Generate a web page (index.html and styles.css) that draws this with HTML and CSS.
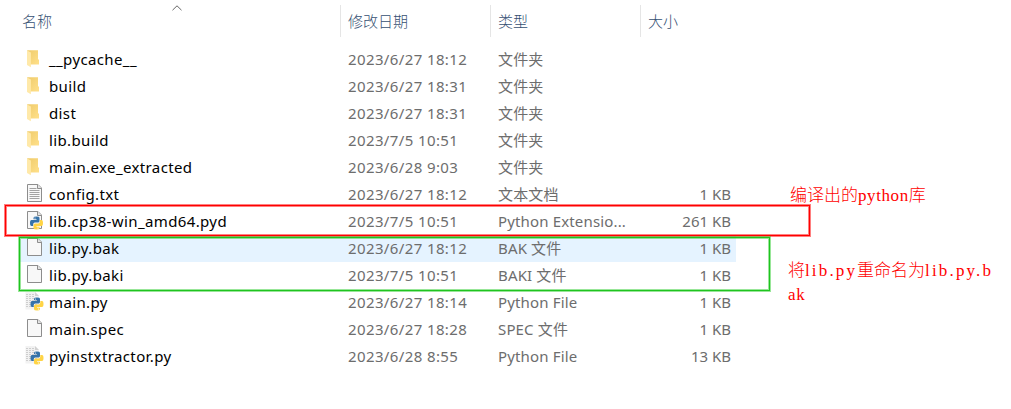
FILE: index.html
```html
<!DOCTYPE html>
<html lang="zh-CN">
<head>
<meta charset="utf-8">
<title>名称</title>
<link rel="stylesheet" href="styles.css">
</head>
<body>
<svg class="defs" width="0" height="0">
  <defs>
    <linearGradient id="fold" x1="0" y1="0" x2="1" y2="1"><stop offset="0" stop-color="#efcb6b"/><stop offset="1" stop-color="#ffe08a"/></linearGradient>
    <symbol id="folder" viewBox="0 0 20 20">
      <path d="M2.2 1.2H13V10.500h1v5H2.2z" fill="url(#fold)"/>
      <path d="M2 1.5L5.900 3.500v14.700L2 16z" fill="#ffe9a9"/>
    </symbol>
    <symbol id="page" viewBox="0 0 20 20">
      <path d="M2.5 .5H13L16.5 4V17.5H2.5z" fill="#f8f8f8" stroke="#8d8d8d"/>
      <path d="M12.5 .5V4.500H16.5" fill="#e4e4e4" stroke="#8d8d8d"/>
    </symbol>
    <symbol id="snakes" viewBox="0 0 14 14">
      <path d="M4 3.3V1.8Q4 .5 7 .5T10 1.8V5Q10 6.6 8.4 6.6H5.3Q3.7 6.6 3.7 8.2V10H2Q.5 10 .5 7T2 4H7V3.3z" fill="#3673a9"/>
      <path d="M10 10.7V12.2Q10 13.5 7 13.5T4 12.2V9Q4 7.4 5.6 7.4H8.7Q10.3 7.4 10.3 5.8V4H12Q13.5 4 13.5 7T12 10H7V10.7z" fill="#ffd445"/>
      <circle cx="5.5" cy="2" r=".6" fill="#fff"/><circle cx="8.5" cy="12" r=".6" fill="#fff"/>
    </symbol>
    <symbol id="text" viewBox="0 0 20 20">
      <use href="#page"/>
      <path d="M4.500 4.500h7M4.500 6.500h10M4.500 8.500h10M4.500 10.500h10M4.500 12.500h10M4.500 14.500h10" stroke="#a2a2a2"/>
    </symbol>
    <symbol id="pyd" viewBox="0 0 20 20">
      <use href="#page"/>
      <use href="#snakes" x="4.500" y="5" width="14" height="14"/>
    </symbol>
    <symbol id="py" viewBox="0 0 20 20">
      <path d="M.5 0H10L14 4V17.500H.5z" fill="#f2f2f2"/>
      <path d="M10 0V4H14z" fill="#d2d2d2"/>
      <path d="M1 2.500h8M1 4.500h9M1 6.500h12M1 8.500h12M1 10.500h12M1 12.500h12M1 14.500h12" stroke="#cecece" stroke-dasharray="2 1"/>
      <use href="#snakes" x="5" y="5" width="14" height="14"/>
    </symbol>
  </defs>
</svg>
<main class="explorer">
  <header class="head">
    <div class="h name-h">名称<svg class="sort" width="10" height="6"><path d="M.5 5.2L5 .8l4.500 4.400" fill="none" stroke="#666"/></svg></div>
    <div class="h">修改日期</div><div class="h">类型</div><div class="h">大小</div>
  </header>
  <section class="list">
    <div class="row"><svg class="icon"><use href="#folder"/></svg><span class="name">__pycache__</span><span class="date">2023/6/27 18:12</span><span class="type">文件夹</span><span class="size"></span></div>
    <div class="row"><svg class="icon"><use href="#folder"/></svg><span class="name">build</span><span class="date">2023/6/27 18:31</span><span class="type">文件夹</span><span class="size"></span></div>
    <div class="row"><svg class="icon"><use href="#folder"/></svg><span class="name">dist</span><span class="date">2023/6/27 18:31</span><span class="type">文件夹</span><span class="size"></span></div>
    <div class="row"><svg class="icon"><use href="#folder"/></svg><span class="name">lib.build</span><span class="date">2023/7/5 10:51</span><span class="type">文件夹</span><span class="size"></span></div>
    <div class="row"><svg class="icon"><use href="#folder"/></svg><span class="name">main.exe_extracted</span><span class="date">2023/6/28 9:03</span><span class="type">文件夹</span><span class="size"></span></div>
    <div class="row"><svg class="icon"><use href="#text"/></svg><span class="name">config.txt</span><span class="date">2023/6/27 18:12</span><span class="type">文本文档</span><span class="size">1 KB</span></div>
    <div class="row"><svg class="icon"><use href="#pyd"/></svg><span class="name">lib.cp38-win_amd64.pyd</span><span class="date">2023/7/5 10:51</span><span class="type">Python Extensio...</span><span class="size">261 KB</span></div>
    <div class="row hover"><svg class="icon"><use href="#page"/></svg><span class="name">lib.py.bak</span><span class="date">2023/6/27 18:12</span><span class="type">BAK 文件</span><span class="size">1 KB</span></div>
    <div class="row"><svg class="icon"><use href="#page"/></svg><span class="name">lib.py.baki</span><span class="date">2023/7/5 10:51</span><span class="type">BAKI 文件</span><span class="size">1 KB</span></div>
    <div class="row"><svg class="icon"><use href="#py"/></svg><span class="name">main.py</span><span class="date">2023/6/27 18:14</span><span class="type">Python File</span><span class="size">1 KB</span></div>
    <div class="row"><svg class="icon"><use href="#page"/></svg><span class="name">main.spec</span><span class="date">2023/6/27 18:28</span><span class="type">SPEC 文件</span><span class="size">1 KB</span></div>
    <div class="row"><svg class="icon"><use href="#py"/></svg><span class="name">pyinstxtractor.py</span><span class="date">2023/6/28 8:55</span><span class="type">Python File</span><span class="size">13 KB</span></div>
  </section>
  <div class="box red"></div>
  <div class="box green"></div>
  <div class="note compiled">编译出的<span class="latin python">python</span>库</div>
  <div class="note renamed">将<span class="latin">lib.py</span>重命名为<span class="latin">lib.py.b</span><br><span class="latin ak">ak</span></div>
</main>
</body>
</html>
```
FILE: styles.css
```css
body { margin: 0; background: #fff; font-family: "Noto Sans", "Noto Sans CJK SC", sans-serif; font-size: 15px; }
.defs { position: absolute; }
.explorer { position: relative; width: 1011px; height: 409px; overflow: hidden; }
.head { display: grid; grid-template-columns: 340px 150px 150px 150px; padding-top: 5px; height: 46px; box-sizing: border-box; }
.h { height: 32px; line-height: 32px; box-sizing: border-box; padding-left: 7px; border-left: 1px solid #e5e5e5; color: #354f72; font-family: "Noto Sans CJK SC", sans-serif; font-weight: 300; }
.name-h { padding-left: 21px; border-color: transparent; }
.sort { position: absolute; left: 172px; top: 5px; }
.list { padding-left: 20px; }
.row { display: grid; grid-template-columns: 24px 299px 150px 233px; align-items: center; grid-auto-flow: column; height: 27px; line-height: 27px; padding-left: 5px; width: 711px; color: #6d6d6d; white-space: nowrap; }
.row { grid-template-columns: 24px 299px 150px 133px 100px; }
.hover { background: #e5f3ff; }
.icon { width: 20px; height: 20px; margin-top: -1px; }
.name { color: #000; letter-spacing: .38px; }
.date { letter-spacing: .38px; }
.type { letter-spacing: .15px; }
.size { text-align: right; }
.box { position: absolute; box-sizing: border-box; border: 1px solid; }
.red { left: 5px; top: 205px; width: 805px; height: 31px; border-color: #f00; box-shadow: 0 0 0 1px #ff000080, inset 0 0 0 1px #ff000080; }
.green { left: 19px; top: 237px; width: 751px; height: 54px; border-color: #1fc41f; box-shadow: 0 0 0 1px #32cd3280, inset 0 0 0 1px #32cd3280; }
.note { position: absolute; color: #f00; font: 300 17px/24px "Noto Sans CJK SC", sans-serif; white-space: nowrap; }
.compiled { left: 790px; top: 182px; }
.renamed { left: 788px; top: 258px; line-height: 22px; }
.latin { font-family: "Liberation Serif", serif; letter-spacing: 2.15px; }
.python { letter-spacing: .6px; }
.ak { letter-spacing: .7px; }
```
